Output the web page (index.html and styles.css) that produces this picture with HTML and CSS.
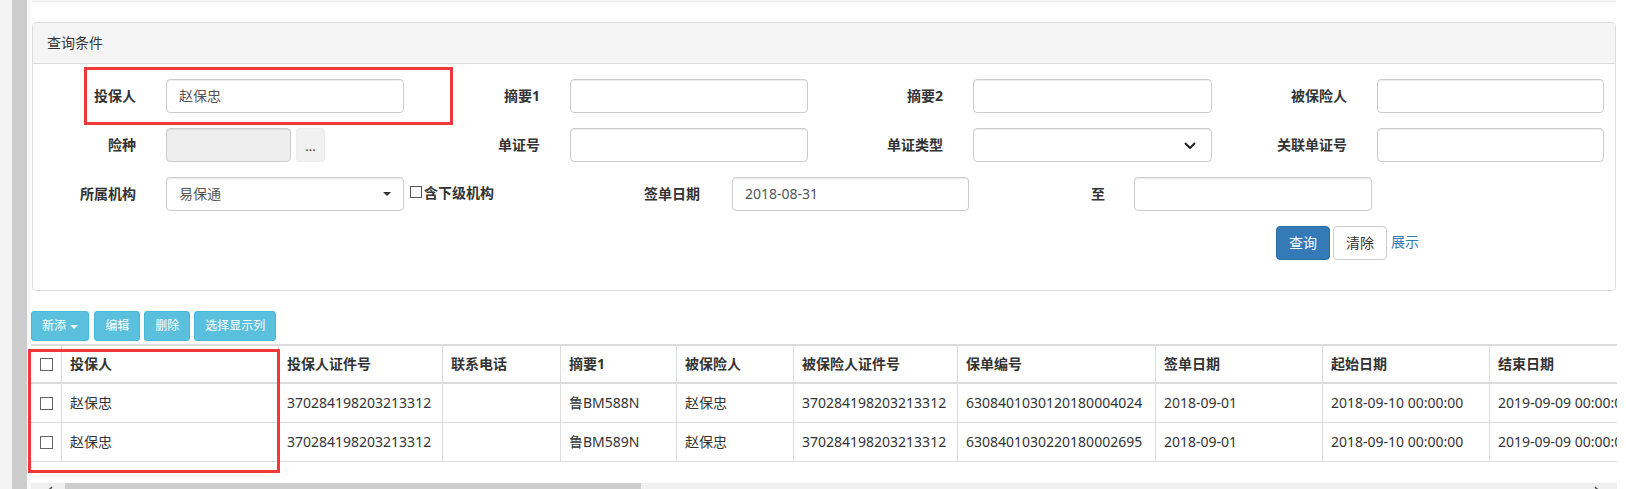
FILE: index.html
```html
<!DOCTYPE html>
<html lang="zh-CN">
<head>
<meta charset="utf-8">
<title>查询</title>
<link rel="stylesheet" href="styles.css">
</head>
<body>
<div class="page">
  <aside class="rail"><div class="rail-light"></div><div class="rail-dark"></div></aside>
  <main class="main">
    <div class="topbox"></div>
    <section class="panel">
      <div class="panel-heading">查询条件</div>
      <div class="panel-body">
        <div class="frow">
          <div class="flabel">投保人</div>
          <div class="ctrl">赵保忠</div>
          <div class="flabel">摘要1</div>
          <div class="ctrl"></div>
          <div class="flabel">摘要2</div>
          <div class="ctrl"></div>
          <div class="flabel">被保险人</div>
          <div class="ctrl"></div>
        </div>
        <div class="frow">
          <div class="flabel">险种</div>
          <div class="pick">
            <div class="ctrl ctrl-disabled"></div>
            <div class="pick-btn">...</div>
          </div>
          <div class="flabel">单证号</div>
          <div class="ctrl"></div>
          <div class="flabel">单证类型</div>
          <div class="ctrl ctrl-select">
            <span></span>
            <svg class="chev" width="12" height="7" viewBox="0 0 12 7"><polyline points="1,1 6,6 11,1" fill="none" stroke="#222" stroke-width="2"/></svg>
          </div>
          <div class="flabel">关联单证号</div>
          <div class="ctrl"></div>
        </div>
        <div class="frow frow-3">
          <div class="flabel">所属机构</div>
          <div class="ctrl ctrl-select">
            <span>易保通</span>
            <svg width="8" height="4" viewBox="0 0 8 4"><polygon points="0,0 8,0 4,4" fill="#333"/></svg>
          </div>
          <div class="subcheck"><span class="sq"></span>含下级机构</div>
          <div class="flabel flabel-date">签单日期</div>
          <div class="ctrl">2018-08-31</div>
          <div class="flabel flabel-to">至</div>
          <div class="ctrl"></div>
        </div>
        <div class="frow">
          <div class="actions">
            <button class="btn btn-primary">查询</button>
            <button class="btn btn-default">清除</button>
            <span class="link">展示</span>
          </div>
        </div>
      </div>
    </section>

    <div class="toolbar">
      <button class="tbtn tbtn-first">新添 <span class="caret"></span></button>
      <button class="tbtn">编辑</button>
      <button class="tbtn">删除</button>
      <button class="tbtn">选择显示列</button>
    </div>

    <div class="table-wrap">
      <table class="grid">
        <colgroup>
          <col class="c-chk"><col class="c-217"><col class="c-164"><col class="c-118"><col class="c-116"><col class="c-117"><col class="c-164"><col class="c-198"><col class="c-167"><col class="c-167"><col class="c-200">
        </colgroup>
        <thead>
          <tr>
            <th class="chk"><span class="sq sq-tb"></span></th>
            <th>投保人</th>
            <th>投保人证件号</th>
            <th>联系电话</th>
            <th>摘要1</th>
            <th>被保险人</th>
            <th>被保险人证件号</th>
            <th>保单编号</th>
            <th>签单日期</th>
            <th>起始日期</th>
            <th>结束日期</th>
          </tr>
        </thead>
        <tbody>
          <tr>
            <td class="chk"><span class="sq sq-tb"></span></td>
            <td>赵保忠</td>
            <td>370284198203213312</td>
            <td></td>
            <td>鲁BM588N</td>
            <td>赵保忠</td>
            <td>370284198203213312</td>
            <td>6308401030120180004024</td>
            <td>2018-09-01</td>
            <td>2018-09-10 00:00:00</td>
            <td>2019-09-09 00:00:00</td>
          </tr>
          <tr>
            <td class="chk"><span class="sq sq-tb"></span></td>
            <td>赵保忠</td>
            <td>370284198203213312</td>
            <td></td>
            <td>鲁BM589N</td>
            <td>赵保忠</td>
            <td>370284198203213312</td>
            <td>6308401030220180002695</td>
            <td>2018-09-01</td>
            <td>2018-09-10 00:00:00</td>
            <td>2019-09-09 00:00:00</td>
          </tr>
        </tbody>
      </table>
    </div>

    <div class="hscroll">
      <div class="sb-left"><svg width="6" height="10" viewBox="0 0 6 10"><polyline points="5,1 1,5 5,9" fill="none" stroke="#505050" stroke-width="1.6"/></svg></div>
      <div class="sb-thumb"></div>
      <div class="sb-track"></div>
      <div class="sb-right"><svg width="6" height="10" viewBox="0 0 6 10"><polyline points="1,1 5,5 1,9" fill="none" stroke="#505050" stroke-width="1.6"/></svg></div>
    </div>
  </main>

  <div class="mark mark-form"></div>
  <div class="mark mark-table"></div>
</div>
</body>
</html>
```

FILE: styles.css
```css
* { box-sizing: border-box; }

html, body {
  margin: 0;
  padding: 0;
  background: #fff;
}

body {
  font-family: "Noto Sans", "Noto Sans CJK SC", sans-serif;
  font-size: 14px;
  line-height: 20px;
  color: #333;
}

.page {
  position: relative;
  display: flex;
  width: 1626px;
  height: 489px;
  overflow: hidden;
}

/* left rail */
.rail {
  flex: none;
  width: 31px;
  display: flex;
  background: #f8f8f8;
}
.rail-light { width: 12px; background: #f3f3f3; }
.rail-dark { width: 15px; background: #cccccc; }

.main {
  flex: none;
  width: 1586px;
}

.topbox {
  margin: 0 1px;
  height: 2px;
  background: #f7f7f7;
  border-bottom: 1px solid #e8e8e8;
}

/* panel */
.panel {
  margin: 20px 1px 0;
  border: 1px solid #ddd;
  border-radius: 4px;
}

.panel-heading {
  height: 41px;
  padding: 10px 14px;
  background: #f5f5f5;
  border-bottom: 1px solid #ddd;
  border-radius: 3px 3px 0 0;
  color: #333;
}

.panel-body {
  display: grid;
  row-gap: 15px;
  padding: 15px 0 30px;
}

.frow {
  display: grid;
  grid-template-columns: 133px 238px 166px 238px 165px 239px 165px 227px;
  align-items: center;
  height: 34px;
}

.frow-3 {
  grid-template-columns: 133px 238px 196px 132px 237px 165px 238px;
}

.flabel {
  text-align: right;
  padding-right: 30px;
  font-weight: bold;
  color: #333;
}
.flabel-date { padding-right: 32px; }
.flabel-to { padding-right: 29px; }

.ctrl {
  height: 34px;
  display: flex;
  align-items: center;
  padding: 0 12px;
  border: 1px solid #ccc;
  border-radius: 4px;
  background: #fff;
  color: #555;
  box-shadow: inset 0 1px 1px rgba(0, 0, 0, .075);
}

.ctrl-select { justify-content: space-between; }
.ctrl-select .chev { margin-right: 3px; }

.ctrl-disabled {
  width: 125px;
  background: #eee;
}

.pick {
  display: flex;
  gap: 5px;
}

.pick-btn {
  width: 29px;
  height: 34px;
  display: flex;
  align-items: flex-end;
  justify-content: center;
  padding-bottom: 8px;
  background: #f1f1f1;
  border: 1px solid #eeeeee;
  border-radius: 3px;
  color: #333;
  font-size: 13px;
  line-height: 14px;
}

.subcheck {
  align-self: start;
  display: flex;
  align-items: center;
  padding: 6px 0 0 6px;
  font-weight: bold;
  line-height: 20px;
}

.sq {
  display: inline-block;
  width: 12px;
  height: 12px;
  border: 1px solid #555;
  background: #fff;
  margin-right: 2px;
  margin-top: -2px;
}

.actions {
  grid-column: 7 / 9;
  display: flex;
  align-items: center;
  padding-left: 64px;
}

.btn {
  height: 34px;
  padding: 0 12px;
  font-family: inherit;
  font-size: 14px;
  line-height: 20px;
  border-radius: 4px;
  border: 1px solid #ccc;
  cursor: pointer;
}
.btn-primary {
  background: #337ab7;
  border-color: #2e6da4;
  color: #fff;
}
.btn-default {
  margin-left: 3px;
  background: #fff;
  color: #333;
}
.link {
  margin-left: 4px;
  margin-top: -2px;
  color: #337ab7;
}

/* toolbar */
.toolbar {
  display: flex;
  gap: 4px;
  margin-top: 20px;
}

.tbtn {
  height: 30px;
  padding: 0 10px;
  font-family: inherit;
  font-size: 12px;
  line-height: 18px;
  color: #fff;
  background: #5bc0de;
  border: 1px solid #46b8da;
  border-radius: 3px;
}
.tbtn-first { margin-right: 1px; }

.caret {
  display: inline-block;
  width: 0;
  height: 0;
  margin-left: 1px;
  vertical-align: middle;
  border-top: 4px solid #fff;
  border-left: 4px solid transparent;
  border-right: 4px solid transparent;
}

/* table */
.table-wrap {
  margin-top: 3px;
  width: 1586px;
  overflow: hidden;
}

.grid {
  table-layout: fixed;
  width: 1659px;
  border-collapse: separate;
  border-spacing: 0;
}

.c-chk { width: 31px; }
.c-217 { width: 217px; }
.c-164 { width: 164px; }
.c-118 { width: 118px; }
.c-116 { width: 116px; }
.c-117 { width: 117px; }
.c-198 { width: 198px; }
.c-167 { width: 167px; }
.c-200 { width: 200px; }

.grid th,
.grid td {
  box-sizing: border-box;
  text-align: left;
  white-space: nowrap;
  overflow: hidden;
  border-right: 1px solid #ddd;
  color: #333;
  line-height: 20px;
}

.grid th {
  padding: 8px;
  font-weight: bold;
  border-top: 2px solid #ddd;
  border-bottom: 2px solid #ddd;
}

.grid td {
  padding: 9px 8px;
  border-bottom: 1px solid #ddd;
}

.grid .chk {
  padding-left: 0;
  padding-right: 0;
  text-align: center;
}

.sq-tb {
  width: 13px;
  height: 13px;
  margin: 0;
  border-color: #666;
  vertical-align: -2px;
}

/* fake horizontal scrollbar */
.hscroll {
  display: flex;
  margin-top: 21px;
  height: 17px;
  background: #f0f0f0;
}
.sb-left {
  flex: none;
  width: 34px;
  padding: 3px 0 0 16px;
}
.sb-thumb {
  flex: none;
  width: 576px;
  background: #cdcdcd;
}
.sb-track { flex: 1; }
.sb-right {
  flex: none;
  width: 40px;
  padding: 3px 0 0 17px;
}
.sb-left svg, .sb-right svg { display: block; }

/* red annotation frames */
.mark {
  position: absolute;
  border: 3px solid #f0383a;
  pointer-events: none;
}
.mark-form {
  left: 84px;
  top: 67px;
  width: 369px;
  height: 58px;
}
.mark-table {
  left: 28px;
  top: 349px;
  width: 252px;
  height: 124px;
}
```
